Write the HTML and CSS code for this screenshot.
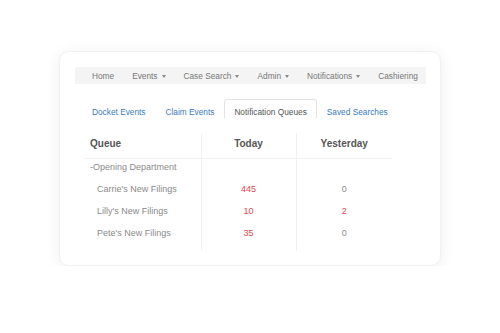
FILE: index.html
```html
<!DOCTYPE html>
<html lang="en">

<head>
    <meta charset="UTF-8">
    <meta name="viewport" content="width=device-width, initial-scale=1.0">
    <title>Notification Queues</title>
    <link rel="stylesheet" href="styles.css">
</head>

<body>
    <div class="page">
        <div class="card">
            <ul class="navbar">
                <li class="navbar__item">Home</li>
                <li class="navbar__item">Events<span class="caret"></span></li>
                <li class="navbar__item">Case Search<span class="caret"></span></li>
                <li class="navbar__item">Admin<span class="caret"></span></li>
                <li class="navbar__item">Notifications<span class="caret"></span></li>
                <li class="navbar__item">Cashiering</li>
            </ul>

            <ul class="tabs">
                <li class="tabs__item">Docket Events</li>
                <li class="tabs__item">Claim Events</li>
                <li class="tabs__item tabs__item--active">Notification Queues</li>
                <li class="tabs__item">Saved Searches</li>
            </ul>

            <table class="queues">
                <thead>
                    <tr>
                        <th class="queues__name">Queue</th>
                        <th>Today</th>
                        <th>Yesterday</th>
                    </tr>
                </thead>
                <tbody>
                    <tr>
                        <td class="queues__name">-Opening Department</td>
                        <td></td>
                        <td></td>
                    </tr>
                    <tr>
                        <td class="queues__name queues__name--sub">Carrie's New Filings</td>
                        <td class="queues__count queues__count--hot">445</td>
                        <td class="queues__count">0</td>
                    </tr>
                    <tr>
                        <td class="queues__name queues__name--sub">Lilly's New Filings</td>
                        <td class="queues__count queues__count--hot">10</td>
                        <td class="queues__count queues__count--hot">2</td>
                    </tr>
                    <tr class="queues__last">
                        <td class="queues__name queues__name--sub">Pete's New Filings</td>
                        <td class="queues__count queues__count--hot">35</td>
                        <td class="queues__count">0</td>
                    </tr>
                </tbody>
            </table>
        </div>
    </div>
</body>

</html>
```

FILE: styles.css
```css
body {
    font-family: "Liberation Sans", Arial, sans-serif;
    margin: 0;
    background: #fff;
}

*,
::after,
::before {
    box-sizing: border-box;
}

ul {
    margin: 0;
    padding: 0;
    list-style: none;
}

.page {
    padding: 51px 0 0 59px;
}

.card {
    width: 382px;
    height: 215px;
    padding: 15px 14px 0 15px;
    border: 1px solid #f1f1f1;
    border-radius: 10px;
    background: #fff;
    box-shadow: 0 2px 16px rgba(0, 0, 0, .07);
}

.navbar {
    display: flex;
    height: 17px;
    padding-left: 8px;
    align-items: center;
    background: #f4f4f4;
}

.navbar__item {
    display: flex;
    padding: 0 9px;
    align-items: center;
    font-size: 8.3px;
    color: #777;
    white-space: nowrap;
}

.caret {
    display: inline-block;
    width: 0;
    height: 0;
    margin: 1px 0 0 4px;
    border-top: 3px solid #888;
    border-left: 2px solid transparent;
    border-right: 2px solid transparent;
}

.tabs {
    display: flex;
    margin: 15px 0 0 7px;
}

.tabs__item {
    height: 19px;
    padding: 4px 9px 0;
    line-height: 16px;
    font-size: 8.3px;
    color: #3a7bbf;
    border: 1px solid transparent;
    border-bottom: 0;
    border-radius: 3px 3px 0 0;
}

.tabs__item--active {
    color: #555;
    border-color: #e3e3e3;
}

.queues {
    width: 308px;
    margin: 15px 0 0 9px;
    border-collapse: collapse;
}

.queues th {
    padding: 4px 0 7px;
    line-height: 14px;
    font-size: 10px;
    font-weight: bold;
    color: #555;
    text-align: center;
    border-bottom: 1px solid #f3f3f3;
}

.queues td {
    height: 22px;
    padding: 0 0 5px;
    line-height: 17px;
    font-size: 9px;
    color: #8a8a8a;
    text-align: center;
}

.queues th+th,
.queues td+td {
    border-left: 1px solid #f1f1f1;
}

.queues th:first-child {
    width: 117px;
}

.queues th:nth-child(2) {
    width: 95px;
}

.queues .queues__name {
    padding-left: 6px;
    text-align: left;
}

.queues .queues__name--sub {
    padding-left: 13px;
}

.queues__count--hot {
    color: #e0474c !important;
}

.queues__last td {
    height: 26px;
    padding-bottom: 9px;
}
```
